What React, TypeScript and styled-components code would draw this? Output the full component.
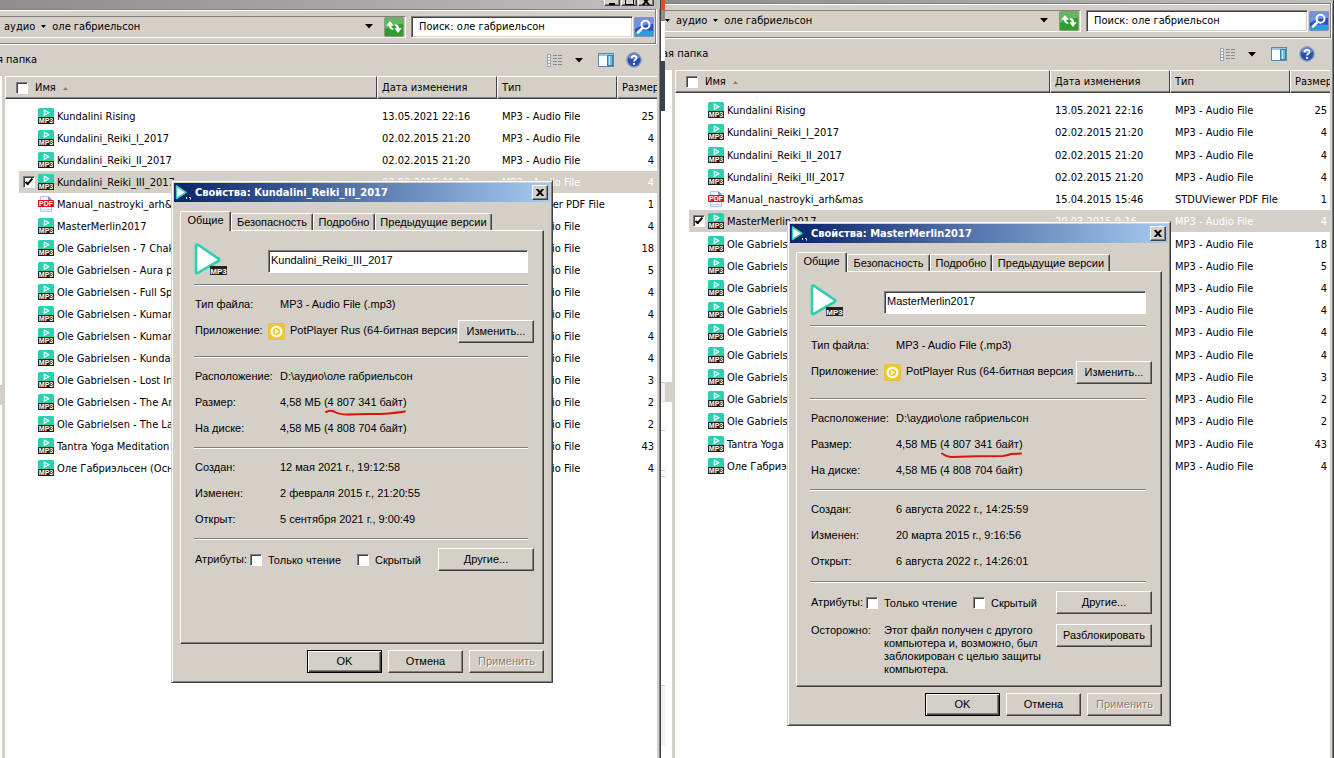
import React from 'react';
import styled, { createGlobalStyle, css } from 'styled-components';

const face = '#d4d0c8';
const shadow = '#808080';
const dark = '#404040';
const listFont = '"DejaVu Sans Condensed", "Noto Sans", sans-serif';
const dialogFont = '"Liberation Sans", sans-serif';

const GlobalStyle = createGlobalStyle`
  *, *::before, *::after { box-sizing: border-box; }
  body { margin: 0; background: #fff; color: #000; font: 11px/14px ${listFont}; }
  button, input { font: inherit; color: inherit; }
  svg { display: block; flex: none; }
`;

const raised = css`
  border: 1px solid;
  border-color: #fff ${dark} ${dark} #fff;
  box-shadow: inset -1px -1px 0 ${shadow};
`;

/* ---------- desktop and explorer windows ---------- */

const Desktop = styled.main`
  display: grid;
  grid-template-columns: 665fr 669fr;
  min-height: 100vh;
  overflow: hidden;
`;

const Pane = styled.section`
  position: relative;
  display: flex;
  min-width: 0;
  overflow: hidden;
`;

const Explorer = styled.div`
  flex: 1;
  min-width: 0;
  display: flex;
  flex-direction: column;
  background: ${face};
  border-right: 1px solid ${dark};
  box-shadow: inset -1px 0 0 ${shadow};
`;

const Caption = styled.div<{ $height: number }>`
  height: ${p => p.$height}px;
  display: flex;
  justify-content: flex-end;
  align-items: flex-end;
  gap: 1px;
  padding: 0 6px 3px 0;
  background: linear-gradient(90deg, #8e8c8c, #c0bfbd);
`;

const CaptionButton = styled.button`
  ${raised}
  width: 16px;
  height: 14px;
  padding: 0;
  display: grid;
  place-items: end center;
  background: ${face};
`;

const AddressBar = styled.div<{ $edge: number }>`
  display: flex;
  align-items: center;
  height: 35px;
  margin-right: ${p => p.$edge}px;
  padding-right: 1px;
  border-top: 1px solid ${shadow};
  border-bottom: 1px solid ${shadow};
  border-right: 1px solid ${shadow};
  box-shadow: 0 1px 0 #fff, inset 0 1px 0 #fff, 1px 0 0 #fff;
`;

const Crumbs = styled.nav<{ $indent: number }>`
  flex: 1;
  min-width: 0;
  display: flex;
  align-items: center;
  gap: 6px;
  height: 22px;
  padding: 0 1px 0 ${p => p.$indent}px;
  border-top: 1px solid ${shadow};
  border-right: 1px solid #fff;
  border-bottom: 1px solid #fff;
  white-space: nowrap;
`;

const Crumb = styled.a`
  color: inherit;
  text-decoration: none;
`;

const IconButton = styled.button`
  flex: none;
  padding: 0;
  border: 0;
  background: none;
  display: grid;
  place-items: center;
`;

const HistoryButton = styled(IconButton)`
  margin: 0 5px 0 auto;
`;

const ViewsArrow = styled(IconButton)`
  padding-right: 3px;
`;

const SearchBox = styled.input`
  width: 222px;
  height: 22px;
  margin: 0 1px 0 5px;
  padding: 0 7px;
  border: 1px solid;
  border-color: ${shadow} #fff #fff ${shadow};
  box-shadow: inset 1px 1px 0 ${dark}, inset -1px -1px 0 ${face};
  border-radius: 0;
  background: #fff;
  outline: none;
  &::placeholder { color: #000; opacity: 1; }
`;

const Toolbar = styled.div`
  display: flex;
  align-items: center;
  height: 32px;
  padding-right: 18px;
  overflow: hidden;
`;

const ToolLink = styled.button`
  margin-left: -3px;
  padding: 0;
  border: 0;
  background: none;
  white-space: nowrap;
`;

const ToolIcons = styled.div`
  display: flex;
  align-items: center;
  gap: 12px;
  margin-left: auto;
`;

const Body = styled.div<{ $tree: number }>`
  flex: 1;
  display: grid;
  grid-template-columns: ${p => p.$tree}px 1fr;
  margin-right: 3px;
`;

const TreeEdge = styled.div<{ $handleTop: number }>`
  margin-right: 3px;
  background: linear-gradient(${face}, ${face}) 0 ${p => p.$handleTop}px / 100% 20px no-repeat #fff;
`;

const ListArea = styled.div`
  min-width: 0;
  background: #fff;
  overflow: hidden;
`;

/* ---------- file table ---------- */

const FileTable = styled.table<{ $height: number }>`
  width: 100%;
  height: ${p => p.$height}px;
  table-layout: fixed;
  border-collapse: collapse;
  white-space: nowrap;
`;

const HeadCell = styled.th<{ $width?: number }>`
  width: ${p => (p.$width ? `${p.$width}px` : 'auto')};
  height: 29px;
  padding: 0 0 6px;
  font-weight: normal;
  text-align: left;
  vertical-align: top;
  overflow: hidden;
`;

const HeadFace = styled.div<{ $first?: boolean; $open?: boolean }>`
  display: flex;
  align-items: center;
  gap: 7px;
  height: 23px;
  padding-top: 1px;
  padding-left: ${p => (p.$first ? 10 : 4)}px;
  background: ${face};
  border: 1px solid;
  border-color: #fff ${dark} ${dark} #fff;
  border-right-width: ${p => (p.$open ? 0 : 1)}px;
  box-shadow: inset 0 -1px 0 ${shadow};
`;

const FileRow = styled.tr<{ $selected?: boolean }>`
  background: ${p => (p.$selected ? `linear-gradient(90deg, #fff 14px, ${face} 14px)` : 'none')};
`;

const Cell = styled.td<{ $faded?: boolean; $end?: boolean }>`
  padding: 2px ${p => (p.$end ? 3 : 0)}px 0 ${p => (p.$end ? 0 : 5)}px;
  text-align: ${p => (p.$end ? 'right' : 'left')};
  color: ${p => (p.$faded ? '#fff' : '#000')};
  overflow: hidden;
`;

const NameCell = styled(Cell)`
  padding: 0 0 0 18px;
`;

const FileName = styled.label`
  display: grid;
  grid-template-columns: 12px 16px auto;
  align-items: center;
  justify-content: start;
  gap: 3px;
`;

const NameText = styled.span`
  padding-top: 2px;
`;

const Tick = styled.input`
  appearance: none;
  flex: none;
  display: grid;
  place-items: center;
  width: 12px;
  height: 12px;
  margin: 0;
  border: 1px solid;
  border-color: ${shadow} #fff #fff ${shadow};
  box-shadow: inset 1px 1px 0 ${dark};
  background: #fff;
  &:checked::after {
    content: '';
    width: 4px;
    height: 8px;
    margin-bottom: 2px;
    border: solid #000;
    border-width: 0 2px 2px 0;
    transform: rotate(42deg);
  }
`;

const NoTick = styled.span``;

/* ---------- properties dialog ---------- */

const Dialog = styled.div<{ $left: number; $top: number; $width: number }>`
  position: absolute;
  left: ${p => p.$left}px;
  top: ${p => p.$top}px;
  width: ${p => p.$width}px;
  padding: 2px;
  background: ${face};
  border: 1px solid;
  border-color: ${face} ${dark} ${dark} ${face};
  box-shadow: inset 1px 1px 0 #fff, inset -1px -1px 0 ${shadow};
  font-family: ${dialogFont};
`;

const TitleBar = styled.header`
  display: flex;
  align-items: center;
  gap: 4px;
  height: 19px;
  padding-right: 2px;
  background: linear-gradient(90deg, #0a246a, #a6caf0);
  color: #fff;
  font: bold 11px/14px ${listFont};
  white-space: nowrap;
`;

const CloseButton = styled.button`
  ${raised}
  margin-left: auto;
  width: 16px;
  height: 15px;
  padding: 0;
  display: grid;
  place-items: center;
  background: ${face};
`;

const TabStrip = styled.div`
  display: flex;
  align-items: flex-end;
  padding: 9px 6px 0;
  height: 28px;
`;

const Tab = styled.button<{ $active?: boolean; $width: number }>`
  width: ${p => p.$width}px;
  height: ${p => (p.$active ? 20 : 17)}px;
  margin-bottom: ${p => (p.$active ? -1 : 0)}px;
  position: relative;
  z-index: ${p => (p.$active ? 1 : 0)};
  padding: 0 0 ${p => (p.$active ? 3 : 0)}px;
  background: ${face};
  border: 1px solid;
  border-color: #fff ${dark} transparent #fff;
  border-bottom: 0;
  border-radius: 2px 2px 0 0;
  box-shadow: inset -1px 0 0 ${shadow};
  white-space: nowrap;
`;

const Sheet = styled.div<{ $height: number }>`
  ${raised}
  min-height: ${p => p.$height}px;
  margin: 0 6px;
  padding: 12px 9px 0 13px;
`;

const Section = styled.div<{ $height: number }>`
  height: ${p => p.$height}px;
  margin-right: 6px;
  border-bottom: 1px solid #fff;
  box-shadow: inset 0 -1px 0 ${shadow};
`;

const FileHead = styled(Section)`
  display: flex;
  align-items: flex-start;
  gap: 41px;
`;

const NameInput = styled.input`
  flex: 1;
  min-width: 0;
  height: 23px;
  margin-top: 7px;
  padding: 0 2px 3px;
  border: 1px solid;
  border-color: ${shadow} #fff #fff ${shadow};
  border-radius: 0;
  box-shadow: inset 1px 1px 0 ${dark};
  background: #fff;
  outline: none;
`;

const Facts = styled(Section).attrs({ as: 'dl' })`
  margin-top: 0;
  margin-bottom: 0;
  padding-top: 6px;
`;

const Fact = styled.div`
  display: grid;
  grid-template-columns: 85px 1fr;
  align-items: center;
  height: 26px;
  padding-left: 1px;
  white-space: nowrap;
`;

const AppFact = styled(Fact)`
  grid-template-columns: 73px 17px minmax(0, 1fr) 76px;
  margin-right: -6px;
`;

const Term = styled.dt`
  margin: 0;
  padding-bottom: 2px;
`;

const Value = styled.dd`
  position: relative;
  margin: 0;
  padding-bottom: 2px;
  justify-self: start;
`;

const AppName = styled.dd`
  margin: 0 0 0 5px;
  padding-bottom: 2px;
`;

const RedMark = styled.svg`
  position: absolute;
  left: 45px;
  top: 13px;
`;

const PushButton = styled.button<{ $width: number; $default?: boolean }>`
  ${raised}
  flex: none;
  width: ${p => p.$width}px;
  height: 23px;
  padding: 0 0 1px;
  background: ${face};
  white-space: nowrap;
  ${p =>
    p.$default &&
    css`
      border-color: #000;
      box-shadow: inset 1px 1px 0 #fff, inset -1px -1px 0 ${dark}, inset -2px -2px 0 ${shadow};
    `}
  &:disabled {
    color: ${shadow};
    text-shadow: 1px 1px 0 #fff;
  }
`;

const Attributes = styled.div`
  display: grid;
  grid-template-columns: 55px 107px 1fr auto;
  align-items: center;
  padding: 8px 0 0 1px;
  white-space: nowrap;
`;

const AttributesTitle = styled.span`
  padding-bottom: 2px;
`;

const CheckLabel = styled.label`
  display: flex;
  align-items: center;
  gap: 6px;
`;

const Warning = styled.div`
  display: grid;
  grid-template-columns: 73px 1fr auto;
  align-items: start;
  padding: 10px 0 0 1px;
  line-height: 13px;
`;

const WarningText = styled.p`
  margin: 0;
  max-width: 168px;
`;

const Footer = styled.footer`
  display: flex;
  justify-content: flex-end;
  gap: 6px;
  padding: 6px 6px 7px;
`;

/* ---------- strip of the window behind the left explorer ---------- */

const Behind = styled.div`
  flex: 0 0 4px;
  display: flex;
  flex-direction: column;
  background: #fff;
`;

const BehindPart = styled.div<{ $height: number; $color: string; $line?: boolean }>`
  height: ${p => p.$height}px;
  background: ${p => p.$color};
  border-bottom: ${p => (p.$line ? '1px solid #c8c8c8' : '0')};
`;

/* ---------- icons ---------- */

const Mp3Icon = () => (
  <svg width="16" height="16" viewBox="0 0 16 16" aria-hidden="true">
    <rect width="16" height="11" rx="1.5" fill="#2ccfae" />
    <path d="M6.2 2v5.400L11 4.700z" fill="#63e0c8" stroke="#e8fffa" strokeWidth="1.100" strokeLinejoin="round" />
    <rect y="9" width="16" height="7" rx="0.5" fill="#1c1c1c" />
    <text x="8" y="15" textAnchor="middle" fontFamily="Liberation Sans, sans-serif" fontWeight="bold" fontSize="7" fill="#fff">MP3</text>
  </svg>
);

const PdfIcon = () => (
  <svg width="16" height="16" viewBox="0 0 16 16" aria-hidden="true">
    <path d="M2.500 .5h8l3 3v12h-11z" fill="#f4f7fd" stroke="#b4c2e0" />
    <path d="M10.500 .5v3h3" fill="#5f86c8" stroke="#7c9bd0" />
    <path d="M3 13.500h10" stroke="#c9d4ea" />
    <rect y="4" width="16" height="7" rx="0.500" fill="#d8141c" />
    <text x="8" y="10" textAnchor="middle" fontFamily="Liberation Sans, sans-serif" fontWeight="bold" fontSize="7" fill="#fff">PDF</text>
  </svg>
);

const PlayIcon = () => (
  <svg width="33" height="33" viewBox="0 0 33 33" aria-hidden="true">
    <path d="M2 3.200v25.200q0 2.600 2.300 1.200L24.400 18q1.800-1.200 0-2.400L4.300 2Q2 .8 2 3.200z" fill="#fff" stroke="#2ccfae" strokeWidth="2.600" strokeLinejoin="round" />
    <rect x="16" y="23" width="17" height="9" fill="#222" />
    <text x="24.500" y="30.500" textAnchor="middle" fontFamily="Liberation Sans, sans-serif" fontWeight="bold" fontSize="8" fill="#fff">MP3</text>
  </svg>
);

const TitleIcon = () => (
  <svg width="17" height="17" viewBox="0 0 17 17" aria-hidden="true">
    <path d="M2.500 2v12.500L12 8.300z" fill="#fff" stroke="#35d3c0" strokeWidth="1.500" strokeLinejoin="round" />
    <path d="M12.500 13v2M15 13.500h1.500v2" stroke="#e8f4f4" fill="none" />
  </svg>
);

const PotIcon = () => (
  <svg width="17" height="17" viewBox="0 0 17 17" aria-hidden="true">
    <rect x="0.500" y="0.500" width="16" height="16" rx="1" fill="#f0c630" stroke="#e3c050" />
    <circle cx="8.500" cy="8.500" r="4.800" fill="#f0c630" stroke="#fffbe6" strokeWidth="2.400" />
    <path d="M7 5.800v5.400l4.200-2.700z" fill="#fffbe6" />
  </svg>
);

const RefreshIcon = () => (
  <svg width="20" height="20" viewBox="0 0 20 20" aria-hidden="true">
    <rect x="0.500" y="0.500" width="19" height="19" rx="1" fill="#2f9e2c" stroke="#8b9a86" />
    <path d="M1 1h18v6Q10 7 1 12z" fill="#62b85c" />
    <path d="M2.300 8.700L6 4l3.700 4.700H7.200q0 2 2 2.600v1.600Q4.900 12.300 4.900 8.700z" fill="#fff" />
    <path d="M17.700 11.300L14 16l-3.700-4.700h2.500q0-2-2-2.600V7.100q4.300.6 4.300 4.200z" fill="#fff" />
  </svg>
);

const SearchIcon = () => (
  <svg width="20" height="20" viewBox="0 0 20 20" aria-hidden="true">
    <rect x="0.500" y="0.500" width="19" height="19" rx="1" fill="#2a4fc0" stroke="#8493b8" />
    <path d="M1 1h18v6Q10 7 1 12z" fill="#6f93e0" />
    <path d="M1 15q9-3 18-1v5H1z" fill="#27a0dc" />
    <circle cx="11.500" cy="7.800" r="4" fill="none" stroke="#fff" strokeWidth="2" />
    <path d="M8.600 10.800L4 15.500" stroke="#fff" strokeWidth="2.600" strokeLinecap="round" />
  </svg>
);

const ViewIcon = () => (
  <svg width="16" height="14" viewBox="0 0 16 14" aria-hidden="true">
    {[0, 3, 6, 9].map(y => (
      <g key={y}>
        <rect x="0.500" y={y + 1.5} width="3" height="3" fill="#f4f4f4" stroke="#9aa4b0" />
        <path d={`M6 ${y + 2.5}h4M11 ${y + 2.5}h4`} stroke="#808a96" />
      </g>
    ))}
  </svg>
);

const PreviewIcon = () => (
  <svg width="16" height="14" viewBox="0 0 16 14" aria-hidden="true">
    <rect x="0.500" y="0.500" width="15" height="13" fill="#fff" stroke="#5f86a8" />
    <path d="M1 2h14" stroke="#9cc6e2" strokeWidth="2" />
    <rect x="9.500" y="2.500" width="5" height="10" fill="#6cc0de" stroke="#3f7fa4" />
    <path d="M11.500 3v9" stroke="#bfe8f5" />
  </svg>
);

const HelpIcon = () => (
  <svg width="16" height="16" viewBox="0 0 16 16" aria-hidden="true">
    <circle cx="8" cy="8" r="7.200" fill="#2b50ac" stroke="#8fa0c8" strokeWidth="1.400" />
    <path d="M2.500 6a5.800 5.800 0 0 1 11 0Q8 8.500 2.500 6z" fill="#6f8fd6" />
    <path d="M5.600 6.300Q5.600 3.900 8 3.900t2.400 2.100Q10.400 7.300 9 8q-1 .5-1 1.600" fill="none" stroke="#fff" strokeWidth="1.700" />
    <circle cx="8" cy="11.900" r="1.100" fill="#fff" />
  </svg>
);

const DownArrow = ({ small }: { small?: boolean }) =>
  small ? (
    <svg width="5" height="3" viewBox="0 0 5 3" aria-hidden="true"><path d="M0 0h5L2.500 3z" /></svg>
  ) : (
    <svg width="8" height="5" viewBox="0 0 8 5" aria-hidden="true"><path d="M0 0h8L4 4.600z" /></svg>
  );

const SortArrow = () => (
  <svg width="5" height="3" viewBox="0 0 5 3" aria-hidden="true"><path d="M0 3h5L2.500 0z" fill="#808080" /></svg>
);

const CloseGlyph = () => (
  <svg width="8" height="7" viewBox="0 0 8 7" aria-hidden="true">
    <path d="M0 0h2l2 2.300L6 0h2L5.200 3.500 8 7H6L4 4.700 2 7H0l2.800-3.500z" stroke="#000" strokeWidth="0.400" />
  </svg>
);

const CaptionGlyph = ({ kind }: { kind: 'min' | 'max' | 'close' }) =>
  kind === 'close' ? (
    <CloseGlyph />
  ) : (
    <svg width="9" height="8" viewBox="0 0 9 8" aria-hidden="true">
      {kind === 'min' ? <path d="M1 6h6v2H1z" /> : <path d="M0 0h9v8H0zM1 2v5h7V2z" fillRule="evenodd" />}
    </svg>
  );

/* ---------- data ---------- */

interface FileItem { name: string; date: string; size: number; pdf?: boolean }

const files: FileItem[] = [
  { name: 'Kundalini Rising', date: '13.05.2021 22:16', size: 25 },
  { name: 'Kundalini_Reiki_I_2017', date: '02.02.2015 21:20', size: 4 },
  { name: 'Kundalini_Reiki_II_2017', date: '02.02.2015 21:20', size: 4 },
  { name: 'Kundalini_Reiki_III_2017', date: '02.02.2015 21:20', size: 4 },
  { name: 'Manual_nastroyki_arh&mas', date: '15.04.2015 15:46', size: 1, pdf: true },
  { name: 'MasterMerlin2017', date: '20.03.2015 9:16', size: 4 },
  { name: 'Ole Gabrielsen - 7 Chakr', date: '', size: 18 },
  { name: 'Ole Gabrielsen - Aura pr', date: '', size: 5 },
  { name: 'Ole Gabrielsen - Full Spe', date: '', size: 4 },
  { name: 'Ole Gabrielsen - Kumara', date: '', size: 4 },
  { name: 'Ole Gabrielsen - Kumara', date: '', size: 4 },
  { name: 'Ole Gabrielsen - Kundalin', date: '', size: 4 },
  { name: 'Ole Gabrielsen - Lost In', date: '', size: 3 },
  { name: 'Ole Gabrielsen - The And', date: '', size: 2 },
  { name: 'Ole Gabrielsen - The Lak', date: '', size: 2 },
  { name: 'Tantra Yoga Meditation', date: '', size: 43 },
  { name: 'Оле Габриэльсен (Осно', date: '', size: 4 },
];

interface ExplorerProps {
  captionHeight: number;
  buttons?: boolean;
  indent: number;
  edge: number;
  leadingArrow?: boolean;
  folderText: string;
  tree: number;
  handleTop: number;
  tableHeight: number;
  selected: number;
}

function ExplorerWindow(p: ExplorerProps) {
  return (
    <Explorer>
      <Caption $height={p.captionHeight}>
        {p.buttons && (
          <>
            <CaptionButton aria-label="Свернуть"><CaptionGlyph kind="min" /></CaptionButton>
            <CaptionButton aria-label="Развернуть"><CaptionGlyph kind="max" /></CaptionButton>
            <CaptionButton aria-label="Закрыть"><CaptionGlyph kind="close" /></CaptionButton>
          </>
        )}
      </Caption>
      <AddressBar $edge={p.edge}>
        <Crumbs $indent={p.indent}>
          {p.leadingArrow && <DownArrow small />}
          <Crumb href="#audio">аудио</Crumb>
          <DownArrow small />
          <Crumb href="#ole">оле габриельсон</Crumb>
          <HistoryButton aria-label="История"><DownArrow /></HistoryButton>
          <IconButton aria-label="Обновить"><RefreshIcon /></IconButton>
        </Crumbs>
        <SearchBox aria-label="Поиск" placeholder="Поиск: оле габриельсон" />
        <IconButton aria-label="Найти"><SearchIcon /></IconButton>
      </AddressBar>
      <Toolbar>
        <ToolLink>{p.folderText}</ToolLink>
        <ToolIcons>
          <IconButton aria-label="Вид"><ViewIcon /></IconButton>
          <ViewsArrow aria-label="Другие виды"><DownArrow /></ViewsArrow>
          <IconButton aria-label="Область просмотра"><PreviewIcon /></IconButton>
          <IconButton aria-label="Справка"><HelpIcon /></IconButton>
        </ToolIcons>
      </Toolbar>
      <Body $tree={p.tree}>
        <TreeEdge $handleTop={p.handleTop} />
        <ListArea>
          <FileTable $height={p.tableHeight}>
            <thead>
              <tr>
                <HeadCell>
                  <HeadFace $first>
                    <Tick type="checkbox" aria-label="Выбрать все" />
                    Имя
                    <SortArrow />
                  </HeadFace>
                </HeadCell>
                <HeadCell $width={120}><HeadFace>Дата изменения</HeadFace></HeadCell>
                <HeadCell $width={120}><HeadFace>Тип</HeadFace></HeadCell>
                <HeadCell $width={40}><HeadFace $open>Размер</HeadFace></HeadCell>
              </tr>
            </thead>
            <tbody>
              {files.map((f, i) => {
                const on = i === p.selected;
                return (
                  <FileRow key={i} $selected={on}>
                    <NameCell>
                      <FileName>
                        {on ? <Tick type="checkbox" defaultChecked /> : <NoTick />}
                        {f.pdf ? <PdfIcon /> : <Mp3Icon />}
                        <NameText>{f.name}</NameText>
                      </FileName>
                    </NameCell>
                    <Cell $faded={on}>{f.date}</Cell>
                    <Cell $faded={on}>{f.pdf ? 'STDUViewer PDF File' : 'MP3 - Audio File'}</Cell>
                    <Cell $faded={on} $end>{f.size}</Cell>
                  </FileRow>
                );
              })}
            </tbody>
          </FileTable>
        </ListArea>
      </Body>
    </Explorer>
  );
}

interface DialogProps {
  id: string;
  left: number;
  top: number;
  width: number;
  name: string;
  tabs: number[];
  sections: [number, number, number, number];
  sheetHeight: number;
  created: string;
  modified: string;
  opened: string;
  mark: string;
  blocked?: boolean;
}

const tabNames = ['Общие', 'Безопасность', 'Подробно', 'Предыдущие версии'];

function PropertiesDialog(p: DialogProps) {
  return (
    <Dialog role="dialog" aria-labelledby={`${p.id}-title`} $left={p.left} $top={p.top} $width={p.width}>
      <TitleBar>
        <TitleIcon />
        <span id={`${p.id}-title`}>Свойства: {p.name}</span>
        <CloseButton aria-label="Закрыть"><CloseGlyph /></CloseButton>
      </TitleBar>
      <TabStrip role="tablist">
        {tabNames.map((t, i) => (
          <Tab key={t} role="tab" aria-selected={i === 0} $active={i === 0} $width={p.tabs[i]}>{t}</Tab>
        ))}
      </TabStrip>
      <Sheet $height={p.sheetHeight}>
        <FileHead $height={p.sections[0]}>
          <PlayIcon />
          <NameInput aria-label="Имя файла" defaultValue={p.name} />
        </FileHead>
        <Facts $height={p.sections[1]}>
          <Fact><Term>Тип файла:</Term><Value>MP3 - Audio File (.mp3)</Value></Fact>
          <AppFact>
            <Term>Приложение:</Term>
            <PotIcon />
            <AppName>PotPlayer Rus (64-битная версия</AppName>
            <PushButton $width={76}>Изменить...</PushButton>
          </AppFact>
        </Facts>
        <Facts $height={p.sections[2]}>
          <Fact><Term>Расположение:</Term><Value>D:\аудио\оле габриельсон</Value></Fact>
          <Fact>
            <Term>Размер:</Term>
            <Value>
              4,58 МБ (4 807 341 байт)
              <RedMark width="82" height="9" viewBox="0 0 82 9" aria-hidden="true">
                <path d={p.mark} fill="none" stroke="#d8160c" strokeWidth="2" strokeLinecap="round" strokeLinejoin="round" />
              </RedMark>
            </Value>
          </Fact>
          <Fact><Term>На диске:</Term><Value>4,58 МБ (4 808 704 байт)</Value></Fact>
        </Facts>
        <Facts $height={p.sections[3]}>
          <Fact><Term>Создан:</Term><Value>{p.created}</Value></Fact>
          <Fact><Term>Изменен:</Term><Value>{p.modified}</Value></Fact>
          <Fact><Term>Открыт:</Term><Value>{p.opened}</Value></Fact>
        </Facts>
        <Attributes>
          <AttributesTitle>Атрибуты:</AttributesTitle>
          <CheckLabel><Tick type="checkbox" />Только чтение</CheckLabel>
          <CheckLabel><Tick type="checkbox" />Скрытый</CheckLabel>
          <PushButton $width={96}>Другие...</PushButton>
        </Attributes>
        {p.blocked && (
          <Warning>
            <span>Осторожно:</span>
            <WarningText>
              Этот файл получен с другого компьютера и, возможно, был заблокирован с целью защиты компьютера.
            </WarningText>
            <PushButton $width={96}>Разблокировать</PushButton>
          </Warning>
        )}
      </Sheet>
      <Footer>
        <PushButton $width={75} $default>OK</PushButton>
        <PushButton $width={75}>Отмена</PushButton>
        <PushButton $width={75} disabled>Применить</PushButton>
      </Footer>
    </Dialog>
  );
}

export default function App() {
  return (
    <>
      <GlobalStyle />
      <Desktop>
        <Pane>
          <ExplorerWindow
            captionHeight={9} buttons indent={4} edge={4} folderText="я папка"
            tree={5} handleTop={309} tableHeight={403} selected={3}
          />
          <Behind>
            <BehindPart $height={10} $color="#e8492e" />
            <BehindPart $height={11} $color="#8e8c8c" />
            <BehindPart $height={40} $color="#fff" />
            <BehindPart $height={50} $color="#3a4352" />
            <BehindPart $height={272} $color="#fff" $line />
            <BehindPart $height={20} $color="#eeeff1" />
            <BehindPart $height={28} $color="#fff" $line />
            <BehindPart $height={40} $color="#fff" $line />
            <BehindPart $height={6} $color="#fff" $line />
            <BehindPart $height={142} $color="#fff" />
            <BehindPart $height={67} $color="#fff" $line />
            <BehindPart $height={60} $color="#eef1f5" />
          </Behind>
          <PropertiesDialog
            id="reiki" left={171} top={180} width={382} name="Kundalini_Reiki_III_2017"
            tabs={[51, 82, 62, 117]} sections={[43, 72, 91, 91]} sheetHeight={414}
            created="12 мая 2021 г., 19:12:58" modified="2 февраля 2015 г., 21:20:55" opened="5 сентября 2021 г., 9:00:49"
            mark="M1 4Q6 2 9 3.500Q14 6.500 22 6.500Q32 6 44 6Q60 6.500 80 3.500"
          />
        </Pane>
        <Pane>
          <ExplorerWindow
            captionHeight={3} indent={0} edge={2} leadingArrow folderText="ая папка"
            tree={10} handleTop={312} tableHeight={407} selected={5}
          />
          <PropertiesDialog
            id="merlin" left={122} top={221} width={384} name="MasterMerlin2017"
            tabs={[51, 83, 62, 118]} sections={[43, 73, 91, 92]} sheetHeight={416}
            created="6 августа 2022 г., 14:25:59" modified="20 марта 2015 г., 9:16:56" opened="6 августа 2022 г., 14:26:01"
            mark="M1 3.500Q5 6.500 10 7Q36 6 62 6Q66 5.500 70 4L80 3.500"
            blocked
          />
        </Pane>
      </Desktop>
    </>
  );
}
